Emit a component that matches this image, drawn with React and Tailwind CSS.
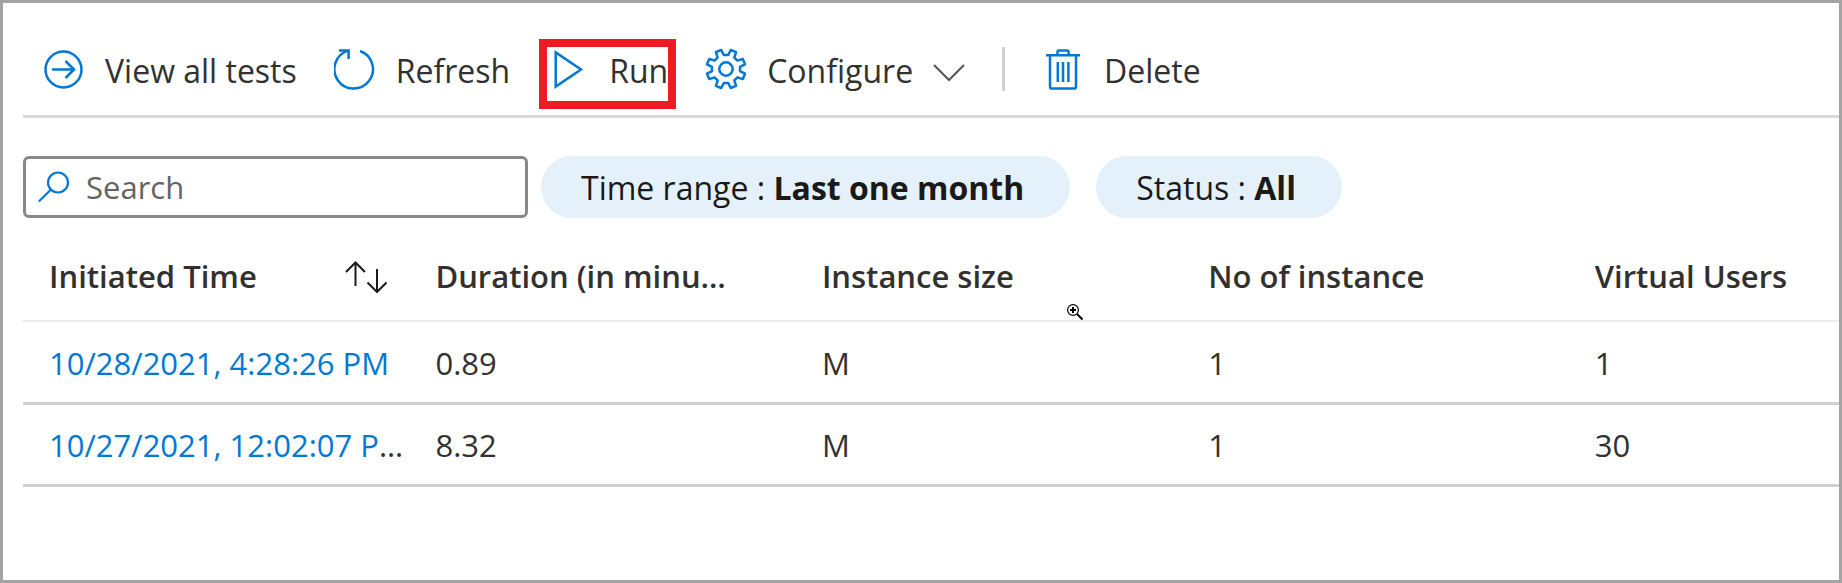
import React from "react";

const GEAR_POINTS = Array.from({ length: 8 }, (_, i) => {
  const base = i * 45;
  return [
    [14.2, base - 9],
    [14.2, base + 9],
    [19.6, base + 14],
    [19.6, base + 31],
  ]
    .map(([r, deg]) => {
      const a = (deg * Math.PI) / 180;
      return `${(21 + r * Math.sin(a)).toFixed(2)},${(21 - r * Math.cos(a)).toFixed(2)}`;
    })
    .join(" ");
}).join(" ");

function Icon({ children }) {
  return (
    <svg
      viewBox="0 0 42 42"
      className="size-[42px] shrink-0 text-[#0078d4]"
      fill="none"
      stroke="currentColor"
      strokeWidth="2.5"
      aria-hidden="true"
    >
      {children}
    </svg>
  );
}

const ViewIcon = () => (
  <Icon>
    <circle cx="20.5" cy="21.5" r="18" />
    <path d="M9 21.5H31M22.5 13L31 21.5L22.5 30" />
  </Icon>
);

const RefreshIcon = () => (
  <Icon>
    <path d="M26 3A19.3 19.3 0 1 1 14.6 2.6" />
    <path d="M5 2.4H14.6V11" />
  </Icon>
);

const PlayIcon = () => (
  <Icon>
    <path d="M8.7 4.4V38.6L34 21.5Z" />
  </Icon>
);

const GearIcon = () => (
  <Icon>
    <polygon points={GEAR_POINTS} strokeLinejoin="round" />
    <circle cx="21" cy="21" r="6.7" />
  </Icon>
);

const TrashIcon = () => (
  <Icon>
    <path d="M4 7.2H38M15.5 7V4Q15.5 2.4 17 2.4H25Q26.6 2.4 26.6 4V7M8 7.2V38.5Q8 40.6 10 40.6H32Q34 40.6 34 38.5V7.2" />
    <path d="M15.8 14V34M21 14V34M26.4 14V34" />
  </Icon>
);

function Command({ icon, label, children }) {
  return (
    <button type="button" className="relative flex items-center gap-5 leading-10">
      {icon}
      <span className="pt-1">{label}</span>
      {children}
    </button>
  );
}

function Pill({ name, value }) {
  return (
    <button
      type="button"
      className="h-[62px] rounded-full bg-[#e4f1fb] pt-0.5 pr-[46px] pl-10 text-[32px] whitespace-nowrap text-[#1b1a19]"
    >
      {name} : <strong className="font-bold">{value}</strong>
    </button>
  );
}

const COLUMNS = [
  "Initiated Time",
  "Duration (in minutes)",
  "Instance size",
  "No of instance",
  "Virtual Users",
];

const ROWS = [
  ["10/28/2021, 4:28:26 PM", "0.89", "M", "1", "1"],
  ["10/27/2021, 12:02:07 PM", "8.32", "M", "1", "30"],
];

export default function App() {
  return (
    <div className="relative min-h-screen overflow-hidden border-[3px] border-[#a3a3a3] bg-white pl-5 font-['Open_Sans','Noto_Sans',sans-serif] text-[31px] text-[#323130]">
      <div className="flex h-[115px] items-center gap-[37px] border-b-[3px] border-[#d9d9d9] pt-5 pl-5 text-[32px] whitespace-nowrap">
        <Command icon={<ViewIcon />} label="View all tests" />
        <Command icon={<RefreshIcon />} label="Refresh" />
        <Command icon={<PlayIcon />} label="Run">
          <span className="pointer-events-none absolute -inset-x-2 -top-2 h-[70px] border-8 border-[#ed1c24]" />
        </Command>
        <Command icon={<GearIcon />} label="Configure">
          <svg viewBox="0 0 32 18" className="mt-2 h-[18px] w-8" fill="none" stroke="#555" strokeWidth="2" aria-hidden="true">
            <path d="M1 1L16 16L31 1" />
          </svg>
        </Command>
        <div className="h-11 w-[3px] bg-[#d2d0ce]" />
        <Command icon={<TrashIcon />} label="Delete" />
      </div>

      <div className="flex items-center pt-[38px]">
        <label className="flex h-[62px] w-[505px] items-center gap-4 rounded-md border-[3px] border-[#8a8886] pl-3">
          <svg viewBox="0 0 32 32" className="size-8 shrink-0" fill="none" stroke="#0078d4" strokeWidth="2.2" aria-hidden="true">
            <circle cx="20" cy="11.5" r="10" />
            <path d="M13 18.5L0.8 30.5" />
          </svg>
          <input
            type="text"
            aria-label="Search"
            placeholder="Search"
            className="min-w-0 flex-1 bg-transparent outline-none placeholder:text-[#666462]"
          />
        </label>
        <div className="ml-[13px] flex gap-[26px]">
          <Pill name="Time range" value="Last one month" />
          <Pill name="Status" value="All" />
        </div>
      </div>

      <table className="mt-[13px] w-[106.4%] table-fixed border-collapse text-left">
        <thead>
          <tr className="h-[90px] border-b-2 border-[#ebebeb]">
            {COLUMNS.map((name, i) => (
              <th key={name} scope="col" className="pt-0.5 pl-[26px] font-semibold">
                <div className="flex items-center pr-[22px]">
                  <span className="min-w-0 flex-1 truncate">{name}</span>
                  <span className="h-8 w-[42px] shrink-0">
                    {i === 0 && (
                      <svg viewBox="0 0 42 32" className="h-8 w-[42px]" fill="none" stroke="#1b1a19" strokeWidth="2" aria-label="Sort">
                        <path d="M10.5 25V1.5M1 11L10.5 1.5L20 11M32 8V31M22.5 21.5L32 31L41.5 21.5" />
                      </svg>
                    )}
                  </span>
                </div>
              </th>
            ))}
          </tr>
        </thead>
        <tbody>
          {ROWS.map((row) => (
            <tr key={row[0]} className="h-[82px] border-b-[3px] border-[#d0d0d0]">
              {row.map((cell, i) => (
                <td key={i} className="truncate pt-0.5 pr-1 pl-[26px]">
                  {i === 0 ? (
                    <a href="#" className="text-[#0078d4]">
                      {cell}
                    </a>
                  ) : (
                    cell
                  )}
                </td>
              ))}
            </tr>
          ))}
        </tbody>
      </table>

      <svg
        viewBox="0 0 16 16"
        className="pointer-events-none absolute top-[301px] left-[1064px] size-4"
        fill="none"
        stroke="#000"
        aria-hidden="true"
      >
        <circle cx="6" cy="6" r="5.4" strokeWidth="1.2" />
        <path d="M6 3V9M3 6H9" strokeWidth="2" />
        <path d="M10 10L15.5 15.5" strokeWidth="2" />
      </svg>
    </div>
  );
}
